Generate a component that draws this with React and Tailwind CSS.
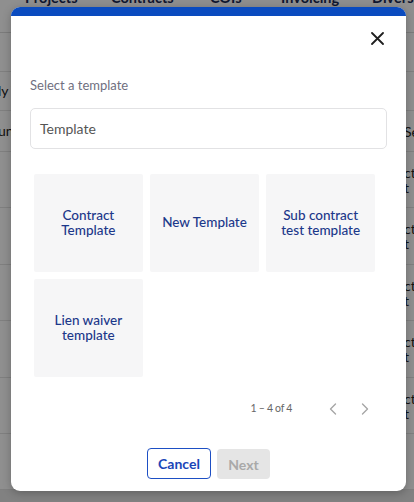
import React from "react";

const font = { fontFamily: "Lato, 'Noto Sans', sans-serif" };

function Background() {
  const rows = [
    { h: "h-[39px]", left: "", right: "" },
    { h: "h-[39px]", left: "ly T", right: "" },
    { h: "h-[41px]", left: "unt", right: "Se" },
    { h: "h-[56px]", left: "", right: "ct", right2: "t" },
    { h: "h-[57px]", left: "", right: "ct", right2: "t" },
    { h: "h-[56px]", left: "", right: "ct", right2: "t" },
    { h: "h-[57px]", left: "", right: "ct", right2: "t" },
    { h: "h-[56px]", left: "", right: "ct", right2: "t" },
    { h: "h-[56px]", left: "", right: "", right2: "" },
  ];
  return (
    <div className="flex flex-col w-[414px] h-[502px] bg-white" style={font}>
      <div className="h-[33px] flex items-start text-[14.5px] font-bold text-[#1a2a55] leading-none border-b border-[#dcdcdc] shrink-0">
        <div className="flex -mt-[9px] pl-[25px] whitespace-nowrap">
          <span className="w-[86px]">Projects</span>
          <span className="w-[99px]">Contracts</span>
          <span className="w-[71px]">COIs</span>
          <span className="w-[91px]">Invoicing</span>
          <span>Diversity</span>
        </div>
      </div>
      {rows.map((r, i) => (
        <div key={i} className={`${r.h} flex justify-between items-center border-b border-[#e2e2e2] text-[14px] text-[#222] shrink-0`}>
          <span className="-ml-[2px] leading-[16px]">{r.left}</span>
          <span className="flex flex-col leading-[15px] -mr-[8px] w-[18px]">
            <span>{r.right}</span>
            {r.right2 && <span>{r.right2}</span>}
          </span>
        </div>
      ))}
      <div className="flex-1 bg-[#e6e6e6]" />
    </div>
  );
}

function Card({ children }) {
  return (
    <div className="h-[98px] bg-[#f6f6f7] rounded-[2px] flex items-center justify-center text-center px-1 text-[13.5px] leading-[15.5px] font-medium text-[#1c388a]">
      {children}
    </div>
  );
}

export default function App() {
  return (
    <div className="relative w-[414px] h-[502px] overflow-hidden" style={font}>
      <Background />
      <div className="absolute inset-0 bg-black/[0.44]" />
      <div className="absolute left-[11px] top-[7px] w-[395px] h-[484px] bg-white rounded-[9px] overflow-hidden flex flex-col shadow-[0_2px_8px_rgba(0,0,0,0.25)]">
        <div className="h-[9px] bg-[#0a4bbf] shrink-0" />
        <div className="flex justify-end pr-[22px] pt-[16px] h-[44px]">
          <svg width="13" height="13" viewBox="0 0 13 13" fill="none" stroke="#1f1f1f" strokeWidth="1.8" strokeLinecap="round">
            <path d="M1 1L12 12M12 1L1 12" />
          </svg>
        </div>
        <div className="px-[19px]">
          <div className="mt-[17px] text-[13px] leading-[16px] text-[#6f6f80]">Select a template</div>
          <div className="mt-[15px] h-[41px] border border-[#e2e2e4] rounded-[5px] flex items-center pl-[9px] text-[14px] text-[#555]">
            Template
          </div>
          <div className="mt-[25px] px-[4px] grid grid-cols-3 gap-x-[7.5px] gap-y-[7px] w-[349px]">
            <Card>
              Contract
              <br />
              Template
            </Card>
            <Card>New Template</Card>
            <Card>
              Sub contract
              <br />
              test template
            </Card>
            <Card>
              Lien waiver
              <br />
              template
            </Card>
          </div>
          <div className="mt-[26px] flex items-center justify-end h-[12px] pr-[18px]">
            <span className="text-[10.5px] text-[#666] tracking-[-0.3px]">1 – 4 of 4</span>
            <svg className="ml-[37px]" width="8" height="12" viewBox="0 0 8 12" fill="none" stroke="#a6a6a6" strokeWidth="1.4" strokeLinecap="round" strokeLinejoin="round">
              <path d="M6.5 1L1.5 6L6.5 11" />
            </svg>
            <svg className="ml-[24px]" width="8" height="12" viewBox="0 0 8 12" fill="none" stroke="#a6a6a6" strokeWidth="1.4" strokeLinecap="round" strokeLinejoin="round">
              <path d="M1.5 1L6.5 6L1.5 11" />
            </svg>
          </div>
          <div className="mt-[33px] flex justify-center gap-[6px]">
            <button className="w-[64px] h-[31px] rounded-[4px] border border-[#1d4fc4] text-[14px] font-bold text-[#1a45b8] bg-white">
              Cancel
            </button>
            <button className="w-[53px] h-[30px] rounded-[4px] bg-[#e5e5e5] text-[14px] font-bold text-[#a9a9a9] mt-[1px]">
              Next
            </button>
          </div>
        </div>
      </div>
    </div>
  );
}
